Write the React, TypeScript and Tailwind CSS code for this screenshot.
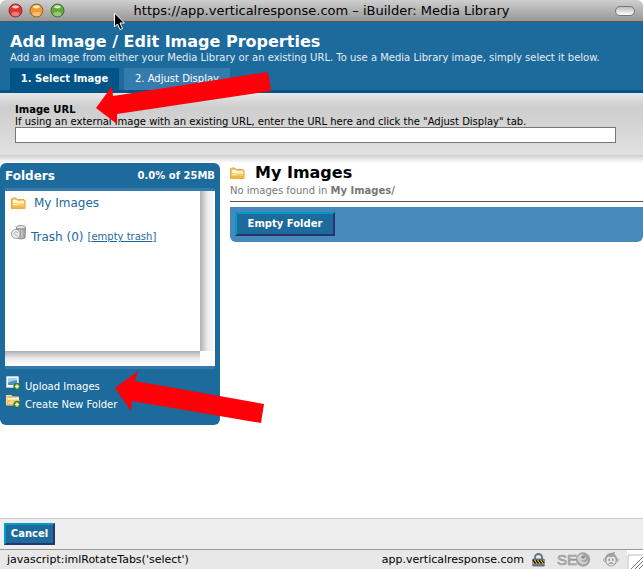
import { useState } from 'react';

function FolderIcon() {
    return (
        <svg width="15" height="13" viewBox="0 0 15 13" aria-hidden="true" className="shrink-0">
            <path d="M.5 11.500V2L1.500 1H5l1.200 1.500H13l1 1v8z" fill="#f7cb62" stroke="#e0a53c" />
            <path d="M2 3h3.500l1 1.200H13V6H2z" fill="#fffbe8" />
            <path d="M2 7.500h4.500l1.200-1.500H13" fill="none" stroke="#fff3c8" />
            <path d="M1 9h13v2.500H1z" fill="#f3b744" />
        </svg>
    );
}

function PlusBadge() {
    return (
        <g>
            <circle cx="11" cy="10.5" r="3.3" fill="#4c9330" stroke="#2d6b22" strokeWidth=".8" />
            <path d="M11 8.5v4M9 10.5h4" stroke="#fff" strokeWidth="1.3" />
        </g>
    );
}

function UploadIcon() {
    return (
        <svg width="15" height="14" viewBox="0 0 15 14" aria-hidden="true" className="shrink-0">
            <path d="M.7 .7h11.6v10.6H.7z" fill="#fff" stroke="#cfdbe5" />
            <path d="M2 2h9v7H2z" fill="#7db8e0" />
            <path d="M2 7c3-1 6-4 9-4v6H2z" fill="#4a93c6" />
            <path d="M2 2h9v2L2 6z" fill="#a9d4ef" />
            <PlusBadge />
        </svg>
    );
}

function NewFolderIcon() {
    return (
        <svg width="15" height="14" viewBox="0 0 15 14" aria-hidden="true" className="shrink-0">
            <path d="M.5 1.5h4.8l1 1.5h6.2v8H.5z" fill="#f2bd55" stroke="#f9dfa0" />
            <path d="M1.5 4h11v2h-11z" fill="#fffbe5" />
            <path d="M1 10.5 3 6h10.5l-1.8 4.5z" fill="#f8d982" stroke="#e6aa41" strokeWidth=".6" />
            <PlusBadge />
        </svg>
    );
}

function TrashIcon() {
    return (
        <svg width="16" height="15" viewBox="0 0 16 15" aria-hidden="true" className="shrink-0">
            <path d="M5.500 2.500 6.500 13c2 1.300 5.500 1 7.500 0l.5-10.500z" fill="#a8a8a8" stroke="#777" strokeWidth=".8" />
            <path d="M8.500 4.500v8M11 5v8" stroke="#ddd" strokeWidth=".9" />
            <ellipse cx="10" cy="2.300" rx="4.500" ry="1.700" fill="#e8e8e8" stroke="#777" strokeWidth=".8" />
            <ellipse cx="4.800" cy="9" rx="4.300" ry="4.500" fill="#ececec" stroke="#8a8a8a" strokeWidth=".8" />
            <path d="M3 9c0-2 2.500-3 4-1M3.500 9.500l3 1.500" fill="none" stroke="#aaa" strokeWidth=".9" />
        </svg>
    );
}

function LockIcon() {
    return (
        <svg width="13" height="14" viewBox="0 0 13 14" aria-hidden="true">
            <path d="M3 7V4a3.500 3 0 0 1 7 0v3" fill="none" stroke="#667078" strokeWidth="1.800" />
            <path d="M.8 6h11.400v7H.8z" fill="#6d7c88" stroke="#5a6670" strokeWidth=".8" />
            <path d="M1 7h11v3.500H1z" fill="#e8c93c" />
            <path d="m1 7 2.500 3.500M4 7l2.500 3.500M7 7l2.500 3.500M10 7l2 3" stroke="#111" strokeWidth="1.300" />
        </svg>
    );
}

function SeoIcon() {
    return (
        <svg width="34" height="15" viewBox="0 0 34 15" role="img" aria-label="SEO">
            <text x="0" y="13" fontFamily="Liberation Sans, sans-serif" fontSize="15" fill="#cfcfcf" stroke="#8d8d8d" strokeWidth=".7">
                SE
            </text>
            <circle cx="26" cy="7.500" r="6.800" fill="#a4a4a4" stroke="#8d8d8d" strokeWidth=".6" />
            <path d="M20 6c1-3 4-4.500 7-4-1.500.5-2 1.500-1 2.500l3 1c0 2.500-2.500 3.500-4.500 2 0 2.500 4 4 6.500.500 0 4.500-8 7.500-11-2z" fill="#cfcfcf" />
            <path d="m25 4 3 .5-1 2-3-.5z" fill="#888" />
        </svg>
    );
}

function MonkeyIcon() {
    return (
        <svg width="16" height="15" viewBox="0 0 16 15" aria-hidden="true">
            <circle cx="2" cy="8" r="1.500" fill="#ddd0c4" stroke="#999" strokeWidth=".6" />
            <circle cx="14" cy="8" r="1.500" fill="#ddd0c4" stroke="#999" strokeWidth=".6" />
            <path d="M2.500 7C2.500 3.500 5 1.500 8 1.500L11.500.5 11 2.200c1.600 1 2.500 2.800 2.500 4.800 0 4-1.500 7-5.500 7s-5.500-3-5.500-7z" fill="#a5a09c" stroke="#8b8784" strokeWidth=".6" />
            <path d="M3.500 7C4 4 7 4.500 8 5.500c1-1 4-1.500 4.500 1.500.5 4-1 6.500-4.500 6.500S3 11 3.500 7z" fill="#eee7df" />
            <path d="M6.200 6.500v2.500M9.800 6.500v2.500M5.500 12c1.200-1.500 3.800-1.500 5 0" stroke="#5f5b58" fill="none" strokeWidth=".9" />
        </svg>
    );
}

function Light({ fill, ring }: { fill: string; ring: string }) {
    return (
        <svg width="15" height="15" viewBox="0 0 15 15" aria-hidden="true">
            <circle cx="7.500" cy="7.500" r="6.500" fill={ fill } stroke={ ring } />
            <ellipse cx="7.500" cy="11" rx="4" ry="2.300" fill="#fff" opacity=".35" />
            <ellipse cx="7.500" cy="3.800" rx="3.300" ry="1.600" fill="#fff" opacity=".75" />
        </svg>
    );
}

/* Red pointers and the mouse cursor lie over the page */
function Annotations() {
    return (
        <svg width="280" height="430" viewBox="0 0 280 430" aria-hidden="true" className="absolute top-0 left-0 pointer-events-none">
            <path d="M96 108 112 86l1 10L268 72l3 19-154 23v10z" fill="#ff0009" />
            <path d="m115 388 23-17-3 10 129 23-3 19-129-22-1 10z" fill="#ff0009" />
            <path d="M114.500 13v14l3-3 2.500 5.500 2.500-1-2.500-5.500h4.500z" fill="#000" stroke="#fff" />
        </svg>
    );
}

const raised = 'border-2 border-t-[#0099cc] border-l-[#0099cc] border-b-[#29346c] border-r-[#29346c] bg-[#1d6a9c] font-bold text-white';

export default function App() {
    const [tab, setTab] = useState('select');
    const [url, setUrl] = useState('');

    return (
        <div className="relative min-h-screen flex flex-col bg-white font-['DejaVu_Sans',sans-serif] text-[10px] leading-3 text-black">
            {/* Window title bar */ }
            <div className="h-[22px] shrink-0 flex items-center px-2 rounded-t-md border-b border-[#555] bg-linear-to-b from-[#cfcfcf] to-[#989898]">
                <div className="flex gap-[6px] w-16">
                    <Light fill="#e0342f" ring="#8a2a28" />
                    <Light fill="#f09a34" ring="#96601f" />
                    <Light fill="#63a832" ring="#41702a" />
                </div>
                <h1 className="flex-1 text-center text-[13px] leading-5 whitespace-nowrap">
                    https://app.verticalresponse.com – iBuilder: Media Library
                </h1>
                <div className="w-16 flex justify-end">
                    <button aria-label="Toggle toolbar" className="w-5 h-[10px] rounded-full border border-[#777] bg-linear-to-b from-[#bbb] to-white" />
                </div>
            </div>

            {/* Header and tabs */ }
            <header className="shrink-0 bg-[#1d6a9c] border-b-[3px] border-[#005488] px-[10px] pt-[10px] text-white">
                <h2 className="text-[16px] leading-5 font-bold">Add Image / Edit Image Properties</h2>
                <p className="text-[#e4eef5] whitespace-nowrap">
                    Add an image from either your Media Library or an existing URL. To use a Media Library image, simply select it below.
                </p>
                <div role="tablist" className="flex gap-[5px] mt-1 h-[22px]">
                    <button
                        role="tab"
                        aria-selected={ tab === 'select' }
                        onClick={ () => setTab('select') }
                        className="w-[109px] bg-[#005488] font-bold whitespace-nowrap"
                    >
                        1. Select Image
                    </button>
                    <button
                        role="tab"
                        aria-selected={ tab === 'adjust' }
                        onClick={ () => setTab('adjust') }
                        className="w-[106px] bg-[#347cad] whitespace-nowrap"
                    >
                        2. Adjust Display
                    </button>
                </div>
            </header>

            {/* Image URL */ }
            <section className="shrink-0 h-[70px] pl-[15px] pr-[27px] pt-[11px] bg-linear-to-b from-[#e8e8e8] via-[#cdcdcd] via-20% to-[#e0e0e0] to-85%">
                <label htmlFor="image-url" className="block h-[23px]">
                    <span className="block font-bold">Image URL</span>
                    <span className="block whitespace-nowrap">
                        If using an external image with an existing URL, enter the URL here and click the "Adjust Display" tab.
                    </span>
                </label>
                <input
                    id="image-url"
                    type="text"
                    value={ url }
                    onChange={ (e) => setUrl(e.target.value) }
                    className="block w-full h-4 px-1 border border-[#777] bg-white outline-none"
                />
                <div className="-ml-[15px] -mr-[27px] mt-3 h-2 bg-linear-to-b from-[#cecece] to-white" />
            </section>

            <main className="flex-1 flex items-start gap-[10px]">
                {/* Folders */ }
                <aside className="w-[220px] h-[262px] shrink-0 px-[5px] rounded-md bg-[#1d6a9c] text-white">
                    <div className="h-7 flex items-center justify-between border-b-[3px] border-[#347cad]">
                        <h3 className="text-[12px] leading-4 font-bold">Folders</h3>
                        <span className="font-bold">0.0% of 25MB</span>
                    </div>
                    <div className="h-[175px] grid grid-cols-[1fr_15px] grid-rows-[1fr_15px] bg-white">
                        <div className="flex flex-col gap-[18px] pl-[6px] pt-1 text-[#1d6a9c] text-[12px] leading-4">
                            <a href="#my-images" className="flex items-center gap-2">
                                <FolderIcon />
                                My Images
                            </a>
                            <div className="flex items-start gap-1 -mt-1 whitespace-nowrap">
                                <TrashIcon />
                                <a href="#trash" className="pt-1">Trash (0)</a>
                                <span className="pt-1 text-[10px] leading-4">
                                    [<a href="#empty" className="underline">empty trash</a>]
                                </span>
                            </div>
                        </div>
                        <div className="bg-linear-to-r from-[#b0b0b0] via-[#ececec] via-50% to-white" />
                        <div className="bg-linear-to-b from-[#b0b0b0] via-[#ececec] via-50% to-white" />
                    </div>
                    <div className="border-t-[3px] border-[#347cad] pt-[7px] flex flex-col gap-px">
                        <a href="#upload" className="flex items-start gap-1 pl-px">
                            <UploadIcon />
                            <span className="pt-[5px]">Upload Images</span>
                        </a>
                        <a href="#new-folder" className="flex items-start gap-1 pl-px">
                            <NewFolderIcon />
                            <span className="pt-[5px]">Create New Folder</span>
                        </a>
                    </div>
                </aside>

                {/* Folder contents */ }
                <section className="flex-1 min-w-0">
                    <h2 className="flex items-center gap-[10px] text-[16px] leading-5 font-bold">
                        <FolderIcon />
                        My Images
                    </h2>
                    <p className="h-[19px] pt-[2px] border-b border-[#555] text-[#777]">
                        No images found in <b>My Images/</b>
                    </p>
                    <div className="mt-[5px] h-[35px] pl-[5px] pt-[5px] rounded-b-md bg-[#468abb]">
                        <button className={ `${raised} w-[100px] h-6` }>Empty Folder</button>
                    </div>
                </section>
            </main>

            <footer className="shrink-0">
                <div className="h-[31px] pl-1 pt-1 border-t border-[#ccc] bg-[#eee]">
                    <button className={ `${raised} w-[51px] h-[22px]` }>Cancel</button>
                </div>
                <div className="h-5 flex items-center border-t border-[#999] bg-[#e8e8e8] pl-[7px] text-[11px]">
                    <span className="flex-1">javascript:imlRotateTabs('select')</span>
                    <span>app.verticalresponse.com</span>
                    <span className="flex items-center gap-3 pl-2">
                        <LockIcon />
                        <SeoIcon />
                        <MonkeyIcon />
                    </span>
                    <svg width="16" height="19" viewBox="0 0 16 19" aria-hidden="true" className="ml-2">
                        <path d="M0 0h16v19H0z" fill="#fff" />
                        <path d="M1 19V5h15" fill="none" stroke="#bbb" />
                        <path d="M4 19 16 7M8 19l8-8M12 19l4-4" stroke="#777" />
                    </svg>
                </div>
            </footer>

            <Annotations />
        </div>
    );
}
